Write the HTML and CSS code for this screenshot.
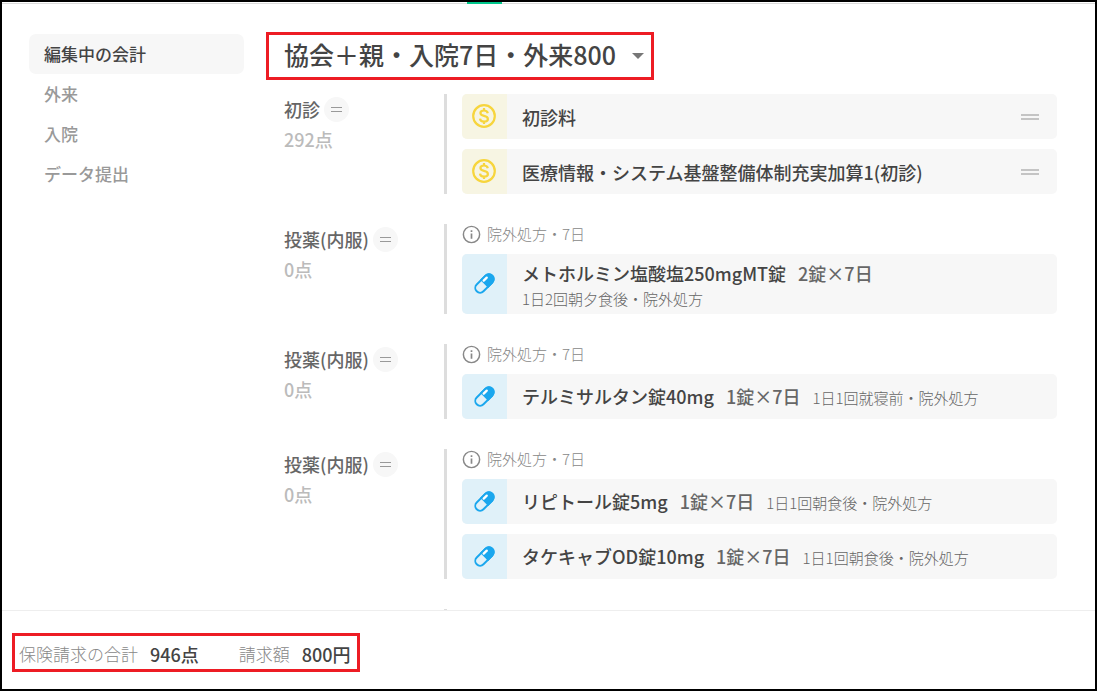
FILE: index.html
```html
<!DOCTYPE html>
<html lang="ja">
<head>
<meta charset="utf-8">
<meta name="viewport" content="width=device-width, initial-scale=1">
<title>会計</title>
<link rel="stylesheet" href="styles.css">
</head>
<body>
<svg class="defs" aria-hidden="true">
  <symbol id="i-coin" viewBox="0 0 24 24">
    <circle cx="12" cy="12" r="10.8" fill="none" stroke="currentColor" stroke-width="2.2"/>
    <path d="M15.8 9.200C15.500 7.500 14 6.500 12 6.500c-2.200 0-3.600 1.100-3.600 2.600 0 1.700 1.400 2.300 3.600 2.800 2.400.5 3.900 1.200 3.900 3 0 1.700-1.600 2.700-3.900 2.700-2.200 0-3.800-1-4-2.900M12 4v2.500M12 17.500V20" fill="none" stroke="currentColor" stroke-width="2.200"/>
  </symbol>
  <symbol id="i-pill" viewBox="0 0 24 24">
    <g transform="rotate(-45 12 12)">
      <rect x="0.500" y="7" width="23" height="10" rx="5" fill="none" stroke="currentColor" stroke-width="2"/>
      <path d="M11.500 6h7a6 6 0 0 1 0 12h-7z" fill="currentColor"/>
      <path d="M13.500 9.300h4.500" fill="none" stroke="#fff" stroke-width="2.400" stroke-linecap="round"/>
    </g>
  </symbol>
  <symbol id="i-info" viewBox="0 0 18 18">
    <circle cx="9" cy="9" r="7.700" fill="none" stroke="currentColor" stroke-width="1.400"/>
    <path d="M9 8v5M9 5v1.600" fill="none" stroke="currentColor" stroke-width="1.600"/>
  </symbol>
</svg>
<div class="frame">
  <div class="tabs"><span class="tab-active"></span></div>
  <div class="body">
    <nav class="nav" aria-label="会計メニュー">
      <a class="nav-link current" href="#" aria-current="page">編集中の会計</a>
      <a class="nav-link" href="#">外来</a>
      <a class="nav-link" href="#">入院</a>
      <a class="nav-link" href="#">データ提出</a>
    </nav>
    <main class="main">
      <div class="picker">
        <select class="picker-select" aria-label="会計の種類"><option>協会＋親・入院7日・外来800</option></select>
        <svg class="caret" viewBox="0 0 12 6" aria-hidden="true"><path d="M0 0h12L6 6z" fill="currentColor"/></svg>
      </div>

      <section class="group">
        <div class="label">
          <div class="label-head"><h2 class="label-name">初診</h2><button class="badge" type="button" aria-label="初診の操作"></button></div>
          <p class="points">292点</p>
        </div>
        <div class="items">
          <article class="item">
            <span class="tile fee"><svg class="icon"><use href="#i-coin"/></svg></span>
            <div class="text"><h3 class="name">初診料</h3></div>
            <button class="handle" type="button" aria-label="並べ替え"></button>
          </article>
          <article class="item">
            <span class="tile fee"><svg class="icon"><use href="#i-coin"/></svg></span>
            <div class="text"><h3 class="name">医療情報・システム基盤整備体制充実加算1(初診)</h3></div>
            <button class="handle" type="button" aria-label="並べ替え"></button>
          </article>
        </div>
      </section>

      <section class="group">
        <div class="label">
          <div class="label-head"><h2 class="label-name">投薬(内服)</h2><button class="badge" type="button" aria-label="投薬の操作"></button></div>
          <p class="points">0点</p>
        </div>
        <div class="items">
          <p class="info"><svg class="info-icon"><use href="#i-info"/></svg>院外処方・7日</p>
          <article class="item tall">
            <span class="tile drug"><svg class="icon"><use href="#i-pill"/></svg></span>
            <div class="text"><h3 class="name">メトホルミン塩酸塩250mgMT錠</h3><span class="dose">2錠×7日</span><span class="usage">1日2回朝夕食後・院外処方</span></div>
          </article>
        </div>
      </section>

      <section class="group">
        <div class="label">
          <div class="label-head"><h2 class="label-name">投薬(内服)</h2><button class="badge" type="button" aria-label="投薬の操作"></button></div>
          <p class="points">0点</p>
        </div>
        <div class="items">
          <p class="info"><svg class="info-icon"><use href="#i-info"/></svg>院外処方・7日</p>
          <article class="item">
            <span class="tile drug"><svg class="icon"><use href="#i-pill"/></svg></span>
            <div class="text"><h3 class="name">テルミサルタン錠40mg</h3><span class="dose">1錠×7日</span><span class="usage">1日1回就寝前・院外処方</span></div>
          </article>
        </div>
      </section>

      <section class="group">
        <div class="label">
          <div class="label-head"><h2 class="label-name">投薬(内服)</h2><button class="badge" type="button" aria-label="投薬の操作"></button></div>
          <p class="points">0点</p>
        </div>
        <div class="items">
          <p class="info"><svg class="info-icon"><use href="#i-info"/></svg>院外処方・7日</p>
          <article class="item">
            <span class="tile drug"><svg class="icon"><use href="#i-pill"/></svg></span>
            <div class="text"><h3 class="name">リピトール錠5mg</h3><span class="dose">1錠×7日</span><span class="usage">1日1回朝食後・院外処方</span></div>
          </article>
          <article class="item">
            <span class="tile drug"><svg class="icon"><use href="#i-pill"/></svg></span>
            <div class="text"><h3 class="name">タケキャブOD錠10mg</h3><span class="dose">1錠×7日</span><span class="usage">1日1回朝食後・院外処方</span></div>
          </article>
        </div>
      </section>

      <section class="group">
        <div class="label"></div>
        <div class="items"><p class="info"><svg class="info-icon"><use href="#i-info"/></svg></p></div>
      </section>
    </main>
  </div>
  <footer class="footer">
    <dl class="totals">
      <div class="total"><dt>保険請求の合計</dt><dd>946点</dd></div>
      <div class="total"><dt>請求額</dt><dd>800円</dd></div>
    </dl>
  </footer>
</div>
</body>
</html>
```
FILE: styles.css
```css
*, *::before { box-sizing: border-box; }
body, h2, h3, p, dl, dd { margin: 0; }
body {
  font-family: "Noto Sans CJK JP", "Noto Sans", sans-serif;
  font-size: 18px;
  font-weight: 500;
  line-height: 30px;
  color: #444;
  background: #fff;
}
h2, h3 { font: inherit; }
button { border: 0; padding: 0; cursor: pointer; }
.defs { display: none; }

.frame {
  display: flex;
  flex-direction: column;
  height: 100vh;
  border: 2px solid #000;
}
.tabs {
  flex: none;
  display: flex;
  height: 2px;
  padding-left: 465px;
  background: linear-gradient(#fff 50%, #dcdcdc 50%);
}
.tab-active { width: 35px; background: #00c78c; }

.body {
  flex: 1;
  min-height: 0;
  display: flex;
  gap: 22px;
  padding: 28px 38px 0 27px;
  overflow: hidden;
}
.nav { flex: none; width: 215px; padding-top: 2px; font-size: 17px; }
.nav-link {
  display: block;
  padding: 5px 15px;
  border-radius: 7px;
  color: #999;
  text-decoration: none;
}
.nav-link.current { background: #f7f7f7; color: #444; }

.main { flex: 1; min-width: 0; }
.picker {
  display: flex;
  align-items: center;
  width: fit-content;
  height: 48px;
  margin-bottom: 14px;
  padding: 0 7px 0 15px;
  border: 3px solid #ed1c24;
}
.picker-select {
  appearance: none;
  border: 0;
  padding: 0 27px 4px 0;
  margin-right: -12px;
  background: transparent;
  color: #444;
  font: inherit;
  font-size: 25px;
  line-height: 38px;
}
.caret { flex: none; width: 12px; height: 6px; color: #777; pointer-events: none; }

.group { display: flex; padding-left: 18px; margin-bottom: 30px; }
.label { flex: none; width: 160px; color: #666; }
.label-head { display: flex; align-items: center; gap: 4px; }
.badge {
  display: grid;
  place-items: center;
  width: 25px;
  height: 25px;
  border-radius: 50%;
  background: #f7f7f7;
}
.badge::before {
  content: "";
  width: 11px;
  height: 5px;
  border: solid #999;
  border-width: 1px 0;
}
.points { color: #bbb; }

.items {
  flex: 1;
  min-width: 0;
  display: flex;
  flex-direction: column;
  gap: 10px;
  padding-left: 15px;
  border-left: 3px solid #ddd;
}
.info {
  display: flex;
  align-items: center;
  gap: 6px;
  height: 20px;
  font-size: 15px;
  font-weight: 300;
  color: #888;
}
.info-icon { width: 19px; height: 19px; }

.item {
  display: flex;
  align-items: center;
  min-height: 45px;
  padding-right: 18px;
  border-radius: 5px;
  background: #f7f7f7;
  overflow: hidden;
}
.tile {
  flex: none;
  align-self: stretch;
  display: grid;
  place-items: center;
  width: 45px;
  padding: 0 1px 1px 0;
}
.fee { background: #f7f5e3; color: #f7d53d; }
.drug { background: #e0f1f9; color: #1aa7ee; }
.icon { width: 24px; height: 24px; }
.drug .icon { width: 23px; height: 23px; }
.text {
  flex: 1;
  display: flex;
  flex-wrap: wrap;
  align-items: baseline;
  column-gap: 12px;
  padding-left: 15px;
}
.dose { color: #666; }
.usage { font-size: 15px; font-weight: 300; color: #666; }
.tall { min-height: 60px; }
.tall .text { padding-top: 3px; }
.tall .name, .tall .dose, .tall .usage { line-height: 25px; }
.tall .usage { flex-basis: 100%; }
.handle {
  width: 18px;
  height: 6px;
  border: solid #c4c4c4;
  border-width: 2px 0;
  background: transparent;
}

.footer {
  flex: none;
  padding: 22px 10px 17px;
  border-top: 1px solid #eee;
}
.totals {
  display: flex;
  gap: 40px;
  width: fit-content;
  padding: 3px 6px 0 4px;
  border: 3px solid #ed1c24;
}
.total { display: flex; gap: 12px; }
.total dt { font-size: 17px; font-weight: 300; color: #888; }
```
